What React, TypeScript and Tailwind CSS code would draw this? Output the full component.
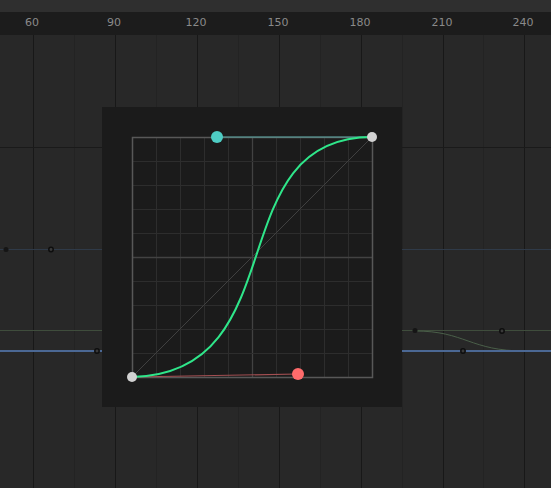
import React from "react";

const labels = [
  { x: 33, t: "60" },
  { x: 115, t: "90" },
  { x: 197, t: "120" },
  { x: 279, t: "150" },
  { x: 361, t: "180" },
  { x: 443, t: "210" },
  { x: 524, t: "240" },
];

const minor = [74, 156, 238, 320, 402, 483];
const gridSteps = [156, 180, 204, 228, 252, 276, 300, 324, 348];
const gridStepsY = [161, 185, 209, 233, 257, 281, 305, 329, 353];

function Timeline() {
  return (
    <svg
      className="absolute inset-0"
      width={551}
      height={453}
      viewBox="0 35 551 453"
    >
      {minor.map((x) => (
        <line key={x} x1={x + 0.5} y1={35} x2={x + 0.5} y2={488} stroke="#232323" />
      ))}
      {labels.map((l) => (
        <line key={l.x} x1={l.x + 0.5} y1={35} x2={l.x + 0.5} y2={488} stroke="#181818" />
      ))}
      <line x1={0} y1={147.5} x2={551} y2={147.5} stroke="#1a1a1a" />

      <line x1={0} y1={249.5} x2={551} y2={249.5} stroke="#2f3a48" />
      <line x1={0} y1={330.5} x2={551} y2={330.5} stroke="#3f4d3c" />
      <path d="M415 331 C465 331 470 351 525 351 L551 351" fill="none" stroke="#4a5f49" />
      <line x1={0} y1={351} x2={551} y2={351} stroke="#4b6894" strokeWidth={2} />

      <circle cx={6} cy={249.5} r={2.5} fill="#151515" />
      <circle cx={51} cy={249.5} r={2.2} fill="#3a3a3a" stroke="#0e0e0e" strokeWidth={1.5} />
      <circle cx={97} cy={351} r={2.2} fill="#3a3a3a" stroke="#0e0e0e" strokeWidth={1.5} />
      <circle cx={415} cy={330.5} r={2.5} fill="#151515" />
      <circle cx={502} cy={331} r={2.2} fill="#3a3a3a" stroke="#0e0e0e" strokeWidth={1.5} />
      <circle cx={463} cy={351} r={2.2} fill="#3a3a3a" stroke="#0e0e0e" strokeWidth={1.5} />
    </svg>
  );
}

function CurvePopup() {
  return (
    <div className="absolute left-[102px] top-[72px] h-[300px] w-[300px] bg-[#1b1b1b]">
      <svg width={300} height={300} viewBox="102 107 300 300">
        {gridSteps.map((x) => (
          <line
            key={x}
            x1={x + 0.5}
            y1={137}
            x2={x + 0.5}
            y2={377}
            stroke={x === 252 ? "#424242" : "#2d2d2d"}
            strokeWidth={x === 252 ? 1.3 : 1}
          />
        ))}
        {gridStepsY.map((y) => (
          <line
            key={y}
            x1={132}
            y1={y + 0.5}
            x2={372}
            y2={y + 0.5}
            stroke={y === 257 ? "#424242" : "#2d2d2d"}
            strokeWidth={y === 257 ? 1.3 : 1}
          />
        ))}
        <rect x={132.5} y={137.5} width={240} height={240} fill="none" stroke="#585858" strokeWidth={1.5} />
        <line x1={132} y1={377} x2={372} y2={137} stroke="#404040" />
        <line x1={132} y1={377} x2={298} y2={374} stroke="#a34f52" strokeWidth={1.2} />
        <line x1={217} y1={137} x2={372} y2={137} stroke="#5aa9a6" strokeWidth={1.2} />
        <path
          d="M132 377 C298 374 217 137 372 137"
          fill="none"
          stroke="#2fe68a"
          strokeWidth={2}
        />
        <circle cx={132} cy={377} r={5} fill="#d2d2d2" />
        <circle cx={372} cy={137} r={5} fill="#d2d2d2" />
        <circle cx={217} cy={137} r={6} fill="#4ecdc4" />
        <circle cx={298} cy={374} r={6} fill="#ff6b6b" />
      </svg>
    </div>
  );
}

export default function App() {
  return (
    <div className="flex h-[488px] w-[551px] flex-col overflow-hidden bg-[#282828] font-['DejaVu_Sans',sans-serif]">
      <div className="h-[12px] bg-[#2f2f2f]" />
      <div className="relative h-[23px] bg-[#1c1c1c]">
        {labels.map((l) => (
          <span
            key={l.t}
            className="absolute top-[4px] -translate-x-1/2 text-[11px] leading-[14px] text-[#8a8a8a]"
            style={{ left: l.x - 1 }}
          >
            {l.t}
          </span>
        ))}
      </div>
      <div className="relative flex-1">
        <Timeline />
        <CurvePopup />
      </div>
    </div>
  );
}
